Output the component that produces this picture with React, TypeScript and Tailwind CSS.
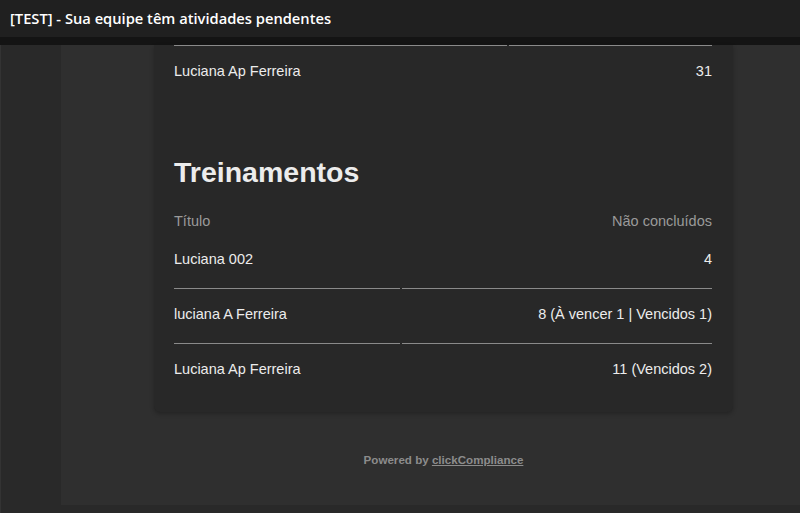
const sans = { fontFamily: '"Liberation Sans", Arial, sans-serif' }

const pending = [{ name: 'Luciana Ap Ferreira', count: '31' }]

const trainings = [
  { name: 'Luciana 002', count: '4' },
  { name: 'luciana A Ferreira', count: '8 (À vencer 1 | Vencidos 1)' },
  { name: 'Luciana Ap Ferreira', count: '11 (Vencidos 2)' },
]

export default function App() {
  return (
    <div className="w-[800px] h-[513px] overflow-hidden bg-[#292929] flex flex-col">
      <div className="h-[37px] shrink-0 bg-[#202020] flex items-center px-[10px]">
        <span className="text-white text-[14.7px] font-semibold" style={{ fontFamily: '"Open Sans", "Noto Sans", sans-serif' }}>
          [TEST] - Sua equipe têm atividades pendentes
        </span>
      </div>
      <div className="h-[8px] shrink-0 bg-[#141414]" />

      <div className="flex flex-1">
        <div className="w-[61px] shrink-0 border-l border-[#333]" />
        <div className="w-[739px] h-[460px] bg-[#2f2f2f] flex flex-col" style={sans}>
          <div className="ml-[93px] w-[579px] bg-[#282828] rounded-b-md shadow-[0_2px_4px_rgba(0,0,0,0.25)] pl-[20px] pr-[21px] pb-[34px]">
            {/* previous table, scrolled */}
            <div className="grid grid-cols-[333px_203px] gap-x-[2px]">
              <div className="border-t border-[#8a8a8a]" />
              <div className="border-t border-[#8a8a8a]" />
              {pending.map((r) => (
                <div key={r.name} className="contents">
                  <div className="pt-[16px] text-[14.5px] leading-[18px] text-[#ececec]">{r.name}</div>
                  <div className="pt-[16px] text-[14.5px] leading-[18px] text-[#ececec] text-right">{r.count}</div>
                </div>
              ))}
            </div>

            <h2 className="mt-[76px] text-[28.5px] leading-[32px] font-bold text-[#ececec]">Treinamentos</h2>

            <div className="mt-[24px] grid grid-cols-[226px_310px] gap-x-[2px] text-[14.5px] leading-[18px]">
              <div className="text-[#9a9a9a]">Título</div>
              <div className="text-[#9a9a9a] text-right">Não concluídos</div>
              {trainings.map((r, i) => {
                const last = i === trainings.length - 1
                const cls = `${i === 0 ? 'pt-[20px]' : 'pt-[16px]'} ${last ? '' : 'pb-[20px] border-b border-[#8a8a8a]'} text-[#ececec]`
                return (
                  <div key={r.name} className="contents">
                    <div className={cls}>{r.name}</div>
                    <div className={`${cls} text-right`}>{r.count}</div>
                  </div>
                )
              })}
            </div>
          </div>

          <p className="mt-[41px] ml-[93px] w-[579px] text-center text-[11.6px] leading-[14px] font-bold text-[#8c8c8c]">
            Powered by <span className="underline">clickCompliance</span>
          </p>
        </div>
      </div>
    </div>
  )
}
